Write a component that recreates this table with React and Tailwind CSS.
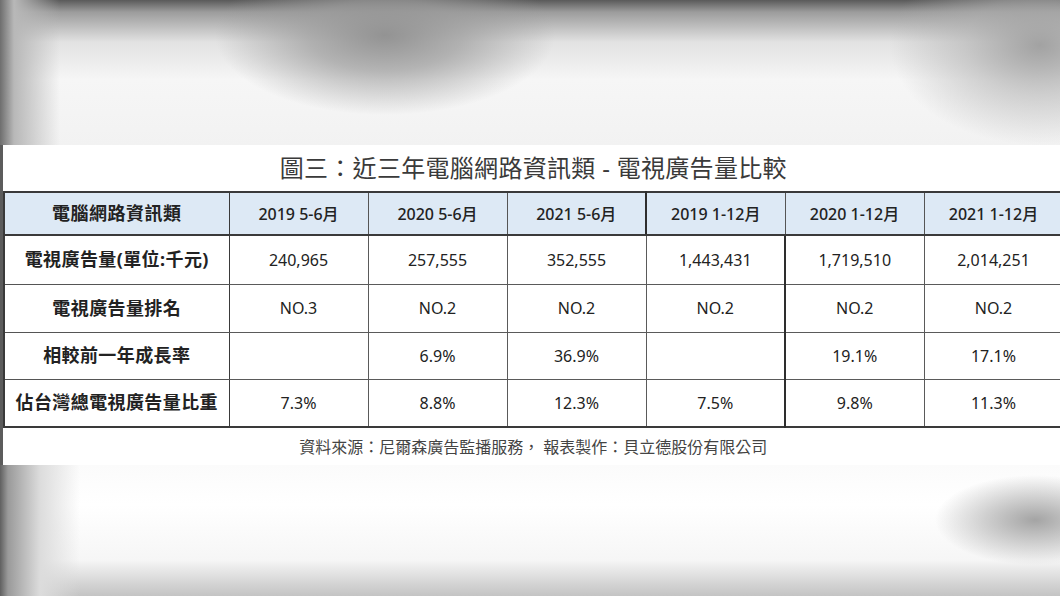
import React from 'react'

/* ─── data ─────────────────────────────────────────── */

const HEAD = ['電腦網路資訊類', '2019 5-6月', '2020 5-6月', '2021 5-6月', '2019 1-12月', '2020 1-12月', '2021 1-12月']

const ROWS = [
  { label: '電視廣告量(單位:千元)', h: 'h-[49px]', cells: ['240,965', '257,555', '352,555', '1,443,431', '1,719,510', '2,014,251'] },
  { label: '電視廣告量排名', h: 'h-[48px]', cells: ['NO.3', 'NO.2', 'NO.2', 'NO.2', 'NO.2', 'NO.2'] },
  { label: '相較前一年成長率', h: 'h-[47px]', cells: ['', '6.9%', '36.9%', '', '19.1%', '17.1%'] },
  { label: '佔台灣總電視廣告量比重', h: 'h-[48px]', cells: ['7.3%', '8.8%', '12.3%', '7.5%', '9.8%', '11.3%'] },
]

const FONT = "font-['Noto_Sans','Noto_Sans_CJK_TC',sans-serif]"

/* col 4 (index 3) carries the heavier divider */
const cellBorder = i => (i === 3 ? 'border-r-2 border-r-[#2e2e2e]' : '')

export default function App() {
  return (
    <div className={`w-[1060px] h-[596px] overflow-hidden flex flex-col bg-white ${FONT}`}>
      {/* blurred photo background — top */}
      <div className="h-[145px] shrink-0 bg-[radial-gradient(ellipse_170px_80px_at_385px_35px,#939393_0%,rgba(155,155,155,0.7)_45%,transparent_100%),radial-gradient(ellipse_150px_100px_at_1040px_45px,#a2a2a2_0%,rgba(175,175,175,0.55)_50%,transparent_100%),linear-gradient(90deg,#6e6e6e_0px,#b8b8b8_14px,rgba(240,240,240,0)_60px),linear-gradient(180deg,#5a5a5a_0px,#9c9c9c_12px,#e2e2e2_42px,#f6f6f6_80px,#f2f2f2_145px)]" />

      {/* white chart panel */}
      <div className="h-[320px] shrink-0 flex bg-[#5c5c5c]">
        <div className="ml-[3px] flex-1 bg-white flex flex-col">
          <div className="h-[46px] flex items-center justify-center text-[24px] leading-none font-normal text-[#3a3a3a] tracking-[0.3px]">
            圖三：近三年電腦網路資訊類 - 電視廣告量比較
          </div>

          <table className="table-fixed border-collapse w-[1059px] border-y-2 border-y-[#3a3a3a] text-[#222]">
            <colgroup>
              <col className="w-[225px]" />
              {HEAD.slice(1).map(h => <col key={h} className="w-[139px]" />)}
            </colgroup>
            <thead>
              <tr className="h-[43px] bg-[#dde9f5]">
                {HEAD.map((h, i) => (
                  <th
                    key={h}
                    className={`border-x border-[#555] border-b-2 border-b-[#3a3a3a] p-0 text-center align-middle ${
                      i === 0 ? 'text-[18px] font-bold border-l-2 border-l-[#3a3a3a] border-r-[#3a3a3a] tracking-[0.5px]' : 'text-[16px] font-medium'
                    } ${i === 3 ? 'border-r-2 border-r-[#2e2e2e]' : ''}`}
                  >
                    {h}
                  </th>
                ))}
              </tr>
            </thead>
            <tbody>
              {ROWS.map(r => (
                <tr key={r.label} className={r.h}>
                  <td className="border border-[#555] border-l-2 border-l-[#3a3a3a] border-r-[#3a3a3a] p-0 text-center align-middle text-[18px] font-bold whitespace-nowrap tracking-[0.4px]">
                    {r.label}
                  </td>
                  {r.cells.map((c, i) => (
                    <td
                      key={i}
                      className={`border border-[#5a5a5a] p-0 text-center align-middle text-[16px] ${cellBorder(i)}`}
                    >
                      {c}
                    </td>
                  ))}
                </tr>
              ))}
            </tbody>
          </table>

          <div className="flex-1 flex items-center justify-center text-[16px] leading-none text-[#444] pt-[1px]">
            資料來源：尼爾森廣告監播服務， 報表製作：貝立德股份有限公司
          </div>
        </div>
      </div>

      {/* blurred photo background — bottom */}
      <div className="flex-1 bg-[radial-gradient(ellipse_100px_45px_at_1035px_55px,#a4a4a4_0%,rgba(170,170,170,0.55)_50%,transparent_100%),linear-gradient(90deg,#606060_0px,#9a9a9a_8px,#dcdcdc_40px,rgba(255,255,255,0)_80px),linear-gradient(180deg,#fbfbfb_0px,#ffffff_40px,#f6f6f6_95px,#d2d2d2_120px,#c4c4c4_131px)]" />
    </div>
  )
}
